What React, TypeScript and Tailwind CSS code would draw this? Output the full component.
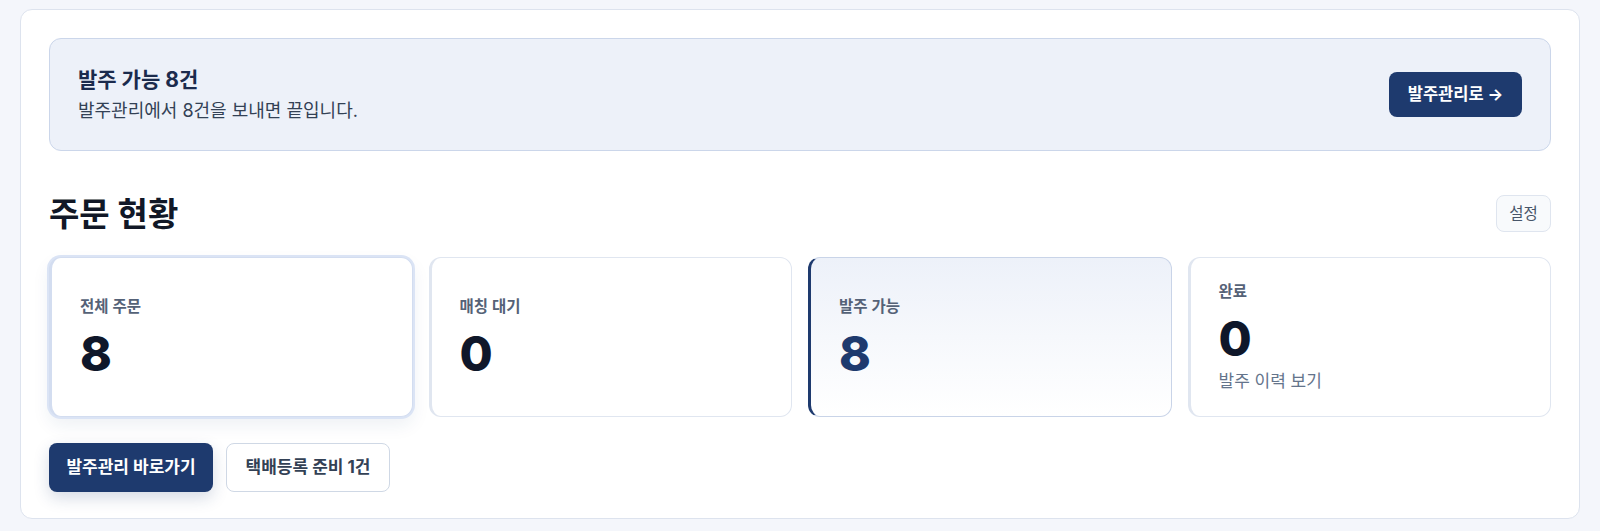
import React from "react"

// --- Types ---
interface StatCard {
  label: string
  value: number
  sub?: string
  variant: "focus" | "plain" | "active"
}

const cards: StatCard[] = [
  { label: "전체 주문", value: 8, variant: "focus" },
  { label: "매칭 대기", value: 0, variant: "plain" },
  { label: "발주 가능", value: 8, variant: "active" },
  { label: "완료", value: 0, sub: "발주 이력 보기", variant: "plain" },
]

const cardClass = (v: StatCard["variant"]) => {
  if (v === "focus") return "bg-white border border-[#d3ddf0] border-l-[3px] ring-2 ring-[#dbe4f5] shadow-[0_8px_18px_rgba(30,58,110,0.08)]"
  if (v === "active") return "bg-gradient-to-b from-[#edf1f9] to-white border border-[#c9d4e8] border-l-[3px] border-l-[#1e3a6e]"
  return "bg-white border border-[#e0e6f0] border-l-[3px]"
}

export default function App() {
  return (
    <div className="min-h-[531px] bg-[#f4f6fb] pt-[9px] px-[20px] pb-3 font-['Inter','Noto_Sans_CJK_KR',sans-serif]">
      <div className="bg-white border border-[#dde3ee] rounded-xl px-7 pt-7 pb-[26px]">

        {/* Banner */}
        <div className="flex items-center justify-between h-[113px] bg-[#edf1f9] border border-[#cbd6ea] rounded-xl px-7">
          <div>
            <h2 className="text-[21px] leading-7 font-bold text-[#1b2b4d]">발주 가능 8건</h2>
            <p className="mt-[5px] text-[18px] leading-6 text-[#334155]">발주관리에서 8건을 보내면 끝입니다.</p>
          </div>
          <button className="h-[45px] w-[133px] rounded-lg bg-[#1e3a6e] text-white text-[16.5px] font-bold">
            발주관리로 →
          </button>
        </div>

        {/* Header */}
        <div className="mt-11 flex items-center justify-between">
          <h1 className="text-[33px] leading-9 font-bold text-[#111827]">주문 현황</h1>
          <button className="h-[37px] w-[55px] rounded-lg border border-[#dfe5ef] bg-[#f8fafc] text-[15.5px] text-[#475569]">
            설정
          </button>
        </div>

        {/* Cards */}
        <div className="mt-[25px] grid grid-cols-4 gap-4">
          {cards.map((c) => (
            <div key={c.label} className={`h-[160px] rounded-xl pl-7 pr-6 flex flex-col justify-center ${cardClass(c.variant)}`}>
              <span className="text-[15.5px] leading-5 font-semibold text-[#556277]">{c.label}</span>
              <span className={`mt-[13px] text-[48px] leading-[48px] font-extrabold ${c.variant === "active" ? "text-[#1e3a6e]" : "text-[#0f172a]"}`}>
                {c.value}
              </span>
              {c.sub && <span className="mt-[6px] text-[17px] leading-6 text-[#64748b]">{c.sub}</span>}
            </div>
          ))}
        </div>

        {/* Actions */}
        <div className="mt-[26px] flex gap-[13px]">
          <button className="h-[49px] w-[164px] rounded-lg bg-[#1e3a6e] text-white text-[17px] font-bold shadow-[0_6px_16px_rgba(30,58,110,0.18)]">
            발주관리 바로가기
          </button>
          <button className="h-[49px] w-[164px] rounded-lg bg-white border border-[#cfd8e5] text-[#334155] text-[17px] font-bold">
            택배등록 준비 1건
          </button>
        </div>
      </div>
    </div>
  )
}
